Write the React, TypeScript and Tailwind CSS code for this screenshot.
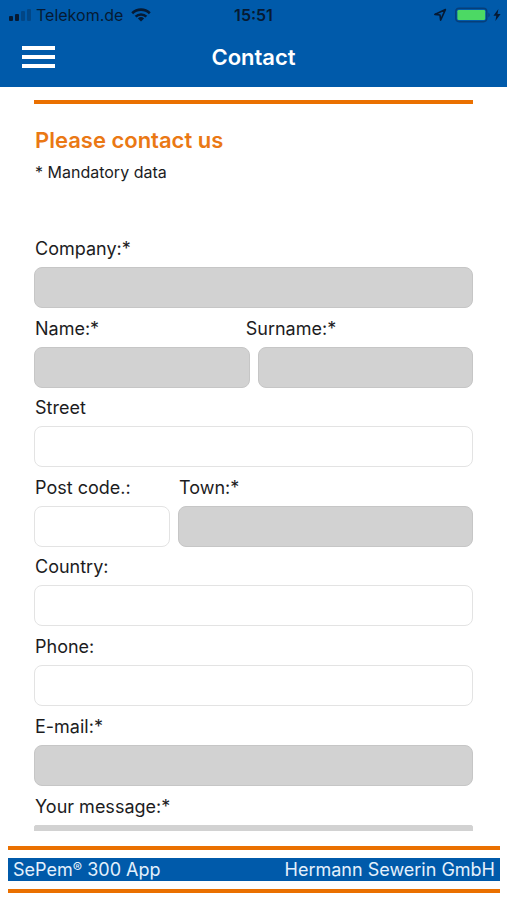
import { useId } from "react";

const boxStyle = "block h-[41px] w-full rounded-lg border px-3 text-lg text-[#1c1c1e] outline-none";
const requiredStyle = "border-[#c6c6c6] bg-[#d2d2d2]";
const optionalStyle = "border-[#e3e3e3] bg-white";
const labelStyle = "pl-px text-lg leading-[26px] text-[#1c1c1e]";

function Field({ label, type = "text", required = false }: { label: string; type?: string; required?: boolean }) {
  const id = useId();
  return (
    <div className="mb-2">
      <label htmlFor={id} className={`${labelStyle} mb-[5px] block`}>
        {label}
      </label>
      <input id={id} type={type} className={`${boxStyle} ${required ? requiredStyle : optionalStyle}`} />
    </div>
  );
}

function StatusBar() {
  return (
    <div className="grid h-[30px] grid-cols-[1fr_auto_1fr] items-center text-base leading-5 text-[#061a33]">
      <div className="flex items-center pl-2">
        <svg width="24" height="14" viewBox="0 0 24 14" fill="currentColor" aria-hidden="true">
          <rect x="1" y="8" width="4" height="5" rx="1" />
          <rect x="7" y="6" width="4" height="7" rx="1" />
          <rect x="13" y="3" width="4" height="10" rx="1" opacity="0.3" />
          <rect x="19" y="1" width="4" height="12" rx="1" opacity="0.3" />
        </svg>
        <span className="ml-1">Telekom.de</span>
        <svg className="ml-2" width="20" height="14" viewBox="0 0 20 14" aria-hidden="true">
          <g fill="none" stroke="currentColor" strokeWidth="2.6">
            <path d="M1.2 5.200a12.600 12.600 0 0 1 17.600 0" />
            <path d="M4.600 8.600a7.800 7.800 0 0 1 10.800 0" />
          </g>
          <path d="M10 13.600 6.900 10.500a4.600 4.600 0 0 1 6.200 0Z" fill="currentColor" />
        </svg>
      </div>
      <span className="font-semibold">15:51</span>
      <div className="flex items-center justify-end pr-1.5">
        <svg width="14" height="14" viewBox="0 0 14 14" aria-hidden="true">
          <path d="M12.4 1.6 1.8 6.4l5.2.6.6 5.2Z" fill="none" stroke="currentColor" strokeWidth="1.6" strokeLinejoin="round" />
        </svg>
        <svg className="ml-2" width="36" height="16" viewBox="0 0 36 16" aria-hidden="true">
          <rect x="0.8" y="1.3" width="31" height="13.4" rx="3.4" fill="none" stroke="#073f7a" strokeWidth="1.4" />
          <rect x="2.4" y="2.9" width="27.8" height="10.2" rx="1.4" fill="#4cd964" />
          <path d="M33.4 5.600c1.800.8 1.800 4 0 4.800Z" fill="#073f7a" />
        </svg>
        <svg className="ml-0.5" width="8" height="12" viewBox="0 0 8 12" fill="currentColor" aria-hidden="true">
          <path d="M5.400 0 0.400 6.800h2.900L2.400 12l5.200-7H4.500Z" />
        </svg>
      </div>
    </div>
  );
}

export default function App() {
  return (
    <div className="flex h-screen flex-col bg-white font-['Inter','Liberation_Sans',sans-serif]">
      <header className="shrink-0 bg-[#005aaa]">
        <StatusBar />
        <div className="grid h-[57px] grid-cols-[1fr_auto_1fr] items-center px-[22px] pb-[3px]">
          <button type="button" aria-label="Menu" className="flex w-[33px] flex-col gap-[5px]">
            <span className="h-1 w-full bg-white" />
            <span className="h-1 w-full bg-white" />
            <span className="h-1 w-full bg-white" />
          </button>
          <h1 className="text-[22px] leading-7 font-semibold text-white">Contact</h1>
        </div>
      </header>

      <main className="min-h-0 flex-1 overflow-y-auto px-[34px] pt-[13px] [scrollbar-width:none]">
        <div className="h-1 bg-[#ea7000]" />
        <h2 className="mt-[22px] pl-px text-[22px] leading-7 font-semibold text-[#ea7814]">Please contact us</h2>
        <p className="mt-2 pl-px text-base leading-5 text-[#1c1c1e]">* Mandatory data</p>

        <form className="mt-[54px]">
          <Field label="Company:*" required />

          <div className="mb-[7px]">
            <div className="mb-[5px] flex">
              <label htmlFor="name" className={`${labelStyle} w-[48%]`}>
                Name:*
              </label>
              <label htmlFor="surname" className={labelStyle}>
                Surname:*
              </label>
            </div>
            <div className="flex gap-2">
              <input id="name" type="text" className={`${boxStyle} ${requiredStyle}`} />
              <input id="surname" type="text" className={`${boxStyle} ${requiredStyle}`} />
            </div>
          </div>

          <Field label="Street" />

          <div className="mb-[7px] grid grid-cols-[31%_1fr] gap-x-2 gap-y-[5px]">
            <label htmlFor="postcode" className={labelStyle}>
              Post code.:
            </label>
            <label htmlFor="town" className={labelStyle}>
              Town:*
            </label>
            <input id="postcode" type="text" className={`${boxStyle} ${optionalStyle}`} />
            <input id="town" type="text" className={`${boxStyle} ${requiredStyle}`} />
          </div>

          <Field label="Country:" />
          <Field label="Phone:" type="tel" />
          <Field label="E-mail:*" type="email" required />

          <label htmlFor="message" className={`${labelStyle} mb-[5px] block`}>
            Your message:*
          </label>
          <textarea
            id="message"
            className="block h-40 w-full resize-none rounded-xs border border-[#d2d2d2] bg-[#d2d2d2] px-3 py-2 text-lg outline-none"
          />
        </form>
      </main>

      <footer className="shrink-0 pt-[15px] pr-[7px] pb-[7px] pl-2">
        <div className="h-1 bg-[#ea7000]" />
        <div className="my-2 flex h-[23px] items-center justify-between bg-[#005aaa] px-[5px] text-lg leading-6 text-[#e4f0fc]">
          <span>
            SePem<span className="align-[3px] text-sm leading-none">®</span> 300 App
          </span>
          <span>Hermann Sewerin GmbH</span>
        </div>
        <div className="h-1 bg-[#ea7000]" />
      </footer>
    </div>
  );
}
